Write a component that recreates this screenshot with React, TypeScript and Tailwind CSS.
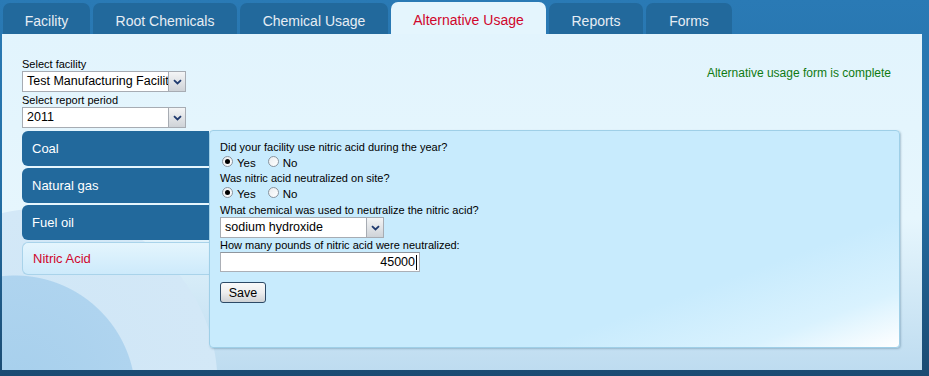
import React from 'react';

const topTabs = [
  { label: 'Facility', w: 'w-[87px]' },
  { label: 'Root Chemicals', w: 'w-[144px]' },
  { label: 'Chemical Usage', w: 'w-[148px]' },
  { label: 'Alternative Usage', w: 'w-[155px]', active: true },
  { label: 'Reports', w: 'w-[94px]' },
  { label: 'Forms', w: 'w-[86px]' },
];

const sideTabs = ['Coal', 'Natural gas', 'Fuel oil', 'Nitric Acid'];

const Arrow: React.FC = () => (
  <div className="w-[17px] h-full flex items-center justify-center border-l border-[#a7acb3] bg-gradient-to-b from-[#f4f5f6] to-[#cfd3d8]">
    <svg width="9" height="6" viewBox="0 0 9 6">
      <path d="M1 1.2 L4.5 4.5 L8 1.2" fill="none" stroke="#1f3a6e" strokeWidth="1.8" />
    </svg>
  </div>
);

const Dropdown: React.FC<{ value: string; w: string }> = ({ value, w }) => (
  <div className={`${w} h-[21px] flex bg-white border border-[#a7acb3]`}>
    <div className="flex-1 overflow-hidden whitespace-nowrap pl-[4px] text-[12.5px] leading-[19px] text-black">{value}</div>
    <Arrow />
  </div>
);

const Radio: React.FC<{ checked?: boolean; label: string }> = ({ checked, label }) => (
  <div className="flex items-start mr-[10px]">
    <div className="mt-[2px] ml-[2px] w-[11px] h-[11px] rounded-full border border-[#8a949e] bg-gradient-to-br from-[#e9ecef] to-white flex items-center justify-center">
      {checked && <div className="w-[5px] h-[5px] rounded-full bg-black" />}
    </div>
    <span className="ml-[4px] mt-[3px] text-[11.5px] leading-[13px]">{label}</span>
  </div>
);

export default function App() {
  return (
    <div className="w-[929px] h-[376px] flex flex-col bg-gradient-to-b from-[#2a7ab5] via-[#2470a6] to-[#1b4b72] font-['Liberation_Sans',Arial,sans-serif] overflow-hidden">
      <div className="h-[34px] flex items-end gap-[3px] pl-[3px] shrink-0">
        {topTabs.map((t) => (
          <div
            key={t.label}
            className={`${t.w} rounded-t-[7px] flex items-center justify-center pt-[5px] text-[14px] ${
              t.active ? 'bg-[#e4f5fd] text-[#d0062c] h-[32px]' : 'bg-[#22699c] text-[#e6edf4] h-[31px]'
            }`}
          >
            {t.label}
          </div>
        ))}
      </div>

      <div className="w-[920px] h-[336px] ml-[2px] pt-[24px] pl-[20px] pr-[22px] bg-[radial-gradient(circle_at_13px_362px,#a6cfec_0px,#afd4ef_120px,transparent_121px),radial-gradient(circle_at_40px_350px,#cfe6f6_0px,#d3e8f7_175px,transparent_176px),linear-gradient(to_bottom,#e2f4fd,#e6f6fd_55%,#bedcf0)] text-[11px] text-black">
        <div className="flex justify-between">
          <div className="flex flex-col">
            <div className="leading-[13px]">Select facility</div>
            <Dropdown value="Test Manufacturing Facility" w="w-[164px]" />
            <div className="leading-[14px] mt-[1px]">Select report period</div>
            <Dropdown value="2011" w="w-[164px]" />
          </div>
          <div className="mt-[6px] mr-[9px] text-[12px] text-[#0f7a12]">Alternative usage form is complete</div>
        </div>

        <div className="flex mt-[2px]">
          <div className="w-[187px] flex flex-col gap-[2px] pt-[1px]">
            {sideTabs.map((s) => (
              <div
                key={s}
                className={`rounded-l-[6px] pl-[10px] flex items-center text-[13px] ${
                  s === 'Nitric Acid'
                    ? 'bg-gradient-to-b from-[#e4f5fd] to-[#cdeafb] border border-r-0 border-[#a9d3ea] text-[#d0062c] h-[33px]'
                    : 'bg-[#22699c] text-white h-[35px]'
                }`}
              >
                {s}
              </div>
            ))}
          </div>
          <div className="w-[691px] h-[218px] rounded-[4px] border border-[#9fcfe7] bg-[linear-gradient(160deg,#c8ebfd_72%,#d9f2fe_88%,#ffffff)] shadow-[1px_1px_2px_rgba(60,100,130,0.35)] pt-[10px] pl-[10px] flex flex-col items-start">
            <div className="leading-[13px]">Did your facility use nitric acid during the year?</div>
            <div className="flex h-[18px]">
              <Radio checked label="Yes" />
              <Radio label="No" />
            </div>
            <div className="leading-[13px]">Was nitric acid neutralized on site?</div>
            <div className="flex h-[18px]">
              <Radio checked label="Yes" />
              <Radio label="No" />
            </div>
            <div className="leading-[14px]">What chemical was used to neutralize the nitric acid?</div>
            <Dropdown value="sodium hydroxide" w="w-[164px]" />
            <div className="leading-[13px] mt-[1px]">How many pounds of nitric acid were neutralized:</div>
            <div className="w-[200px] h-[20px] bg-white border border-[#abafb6] border-t-[#8f969e] flex items-center justify-end pr-[2px] text-[12.5px]">
              45000<span className="w-[1px] h-[15px] bg-black ml-[1px]" />
            </div>
            <button className="mt-[10px] w-[46px] h-[21px] rounded-[3px] border border-[#2d4a66] bg-gradient-to-b from-[#fafafa] via-[#eeeeee] to-[#cfd2d5] text-[12.5px] leading-[18px] text-black">
              Save
            </button>
          </div>
        </div>
      </div>
    </div>
  );
}
